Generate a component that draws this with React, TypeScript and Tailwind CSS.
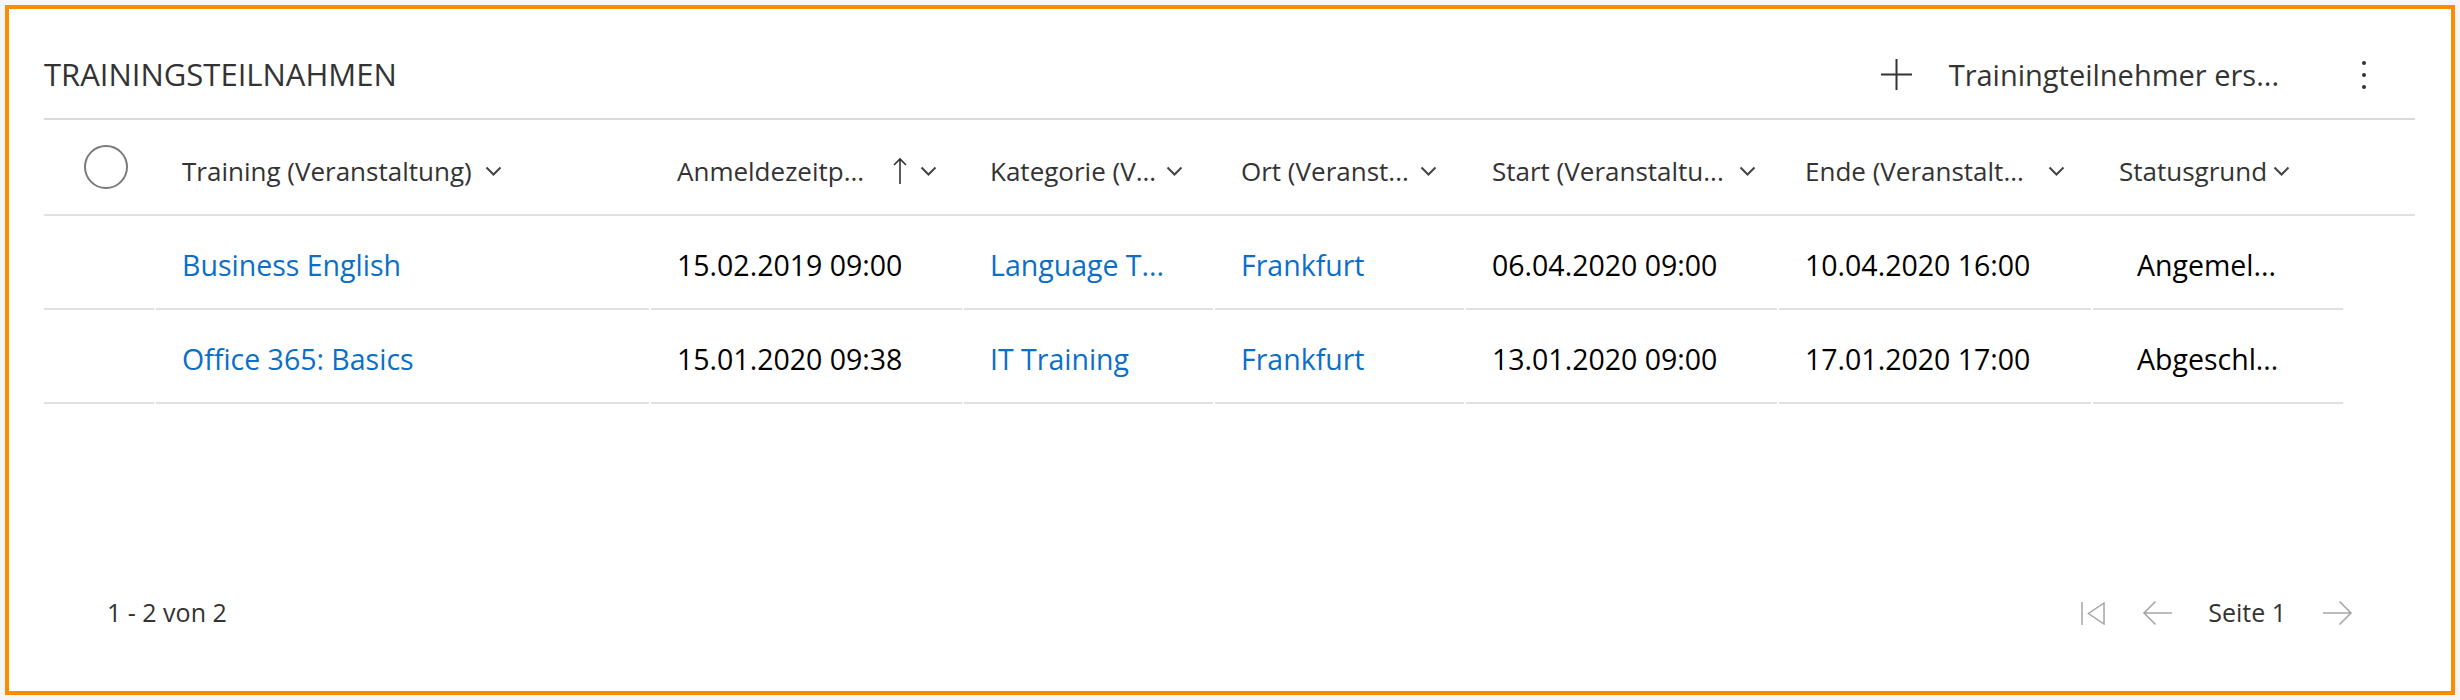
import React from "react";

const ROW = "grid grid-cols-[110px_493px_311px_249px_249px_311px_312px_250px] gap-x-[2px]";

const Chevron = () => (
  <svg width="17" height="10" viewBox="0 0 17 10" className="shrink-0">
    <path d="M1.5 1.5l7 7 7-7" fill="none" stroke="#444" strokeWidth="2" />
  </svg>
);

const SortUp = () => (
  <svg width="14" height="28" viewBox="0 0 14 28" className="shrink-0">
    <path d="M7 27V2M1 8l6-6 6 6" fill="none" stroke="#333" strokeWidth="1.6" />
  </svg>
);

const headers = [
  { label: "Training (Veranstaltung)", gap: "ml-[13px]" },
  { label: "Anmeldezeitp...", gap: "ml-[13px]", sort: true },
  { label: "Kategorie (V...", gap: "ml-[10px]" },
  { label: "Ort (Veranst...", gap: "ml-[11px]" },
  { label: "Start (Veranstaltu...", gap: "ml-[15px]" },
  { label: "Ende (Veranstalt...", gap: "ml-[24px]" },
  { label: "Statusgrund", gap: "ml-[6px]" },
];

const rows = [
  ["Business English", "15.02.2019 09:00", "Language T...", "Frankfurt", "06.04.2020 09:00", "10.04.2020 16:00", "Angemel..."],
  ["Office 365: Basics", "15.01.2020 09:38", "IT Training", "Frankfurt", "13.01.2020 09:00", "17.01.2020 17:00", "Abgeschl..."],
];

const LINK_COLS = [0, 2, 3];

export default function App() {
  return (
    <div className="w-[2460px] h-[700px] bg-[#f6f6f6] p-[5px] font-['Open_Sans','Noto_Sans',sans-serif]">
      <div className="h-full border-4 border-[#ff8c00] bg-white flex flex-col pl-[35px] pr-[36px]">

        {/* Title bar */}
        <div className="h-[111px] pt-[22px] border-b-2 border-[#d9d9d9] flex items-center">
          <h2 className="text-[31px] text-[#333] leading-none">TRAININGSTEILNAHMEN</h2>
          <div className="ml-auto flex items-center mr-[47px]">
            <svg width="31" height="31" viewBox="0 0 31 31">
              <path d="M15.5 0v31M0 15.5h31" stroke="#333" strokeWidth="2" />
            </svg>
            <span className="ml-[37px] text-[29px] text-[#333] leading-none">Trainingteilnehmer ers...</span>
            <svg width="8" height="28" viewBox="0 0 8 28" className="ml-[81px]">
              <circle cx="4" cy="2" r="2" fill="#333" />
              <circle cx="4" cy="14" r="2" fill="#333" />
              <circle cx="4" cy="26" r="2" fill="#333" />
            </svg>
          </div>
        </div>

        {/* Column headers */}
        <div className="h-[96px] border-b-2 border-[#e1e1e1]">
          <div className={ROW + " h-full items-center"}>
            <div className="pl-[40px]">
              <div className="w-[44px] h-[44px] rounded-full border-2 border-[#7a7a7a]" />
            </div>
            {headers.map((h) => (
              <div key={h.label} className="pl-[26px] pt-[8px] flex items-center text-[26px] text-[#333] whitespace-nowrap">
                <span>{h.label}</span>
                {h.sort && (
                  <span className="ml-[29px] flex items-center">
                    <SortUp />
                  </span>
                )}
                <span className={h.gap + " flex items-center"}>
                  <Chevron />
                </span>
              </div>
            ))}
          </div>
        </div>

        {/* Rows */}
        {rows.map((r, i) => (
          <div key={i} className={ROW}>
            <div className="h-[94px] border-b-2 border-[#e1e1e1]" />
            {r.map((c, j) => (
              <div
                key={j}
                className={
                  "h-[94px] pt-[6px] border-b-2 border-[#e1e1e1] flex items-center text-[28.5px] whitespace-nowrap " +
                  (j === 6 ? "pl-[44px] " : "pl-[26px] ") +
                  (LINK_COLS.includes(j) ? "text-[#0b6fc7]" : "text-black")
                }
              >
                {c}
              </div>
            ))}
          </div>
        ))}

        <div className="flex-1" />

        {/* Footer */}
        <div className="h-[60px] mb-[48px] flex items-center pl-[63px] pr-[62px] text-[25px] text-[#333]">
          <span>1 - 2 von 2</span>
          <div className="ml-auto flex items-center">
            <svg width="24" height="23" viewBox="0 0 24 23">
              <path d="M1 0v23M23 1L7.5 11.5 23 22z" fill="none" stroke="#a6a6a6" strokeWidth="1.5" />
            </svg>
            <svg width="31" height="26" viewBox="0 0 31 26" className="ml-[37px]">
              <path d="M30 13H2M13.5 1.5L2 13l11.5 11.5" fill="none" stroke="#a6a6a6" strokeWidth="1.6" />
            </svg>
            <span className="ml-[35px]">Seite 1</span>
            <svg width="31" height="26" viewBox="0 0 31 26" className="ml-[36px]">
              <path d="M1 13h28M17.5 1.5L29 13 17.5 24.5" fill="none" stroke="#a6a6a6" strokeWidth="1.6" />
            </svg>
          </div>
        </div>
      </div>
    </div>
  );
}
